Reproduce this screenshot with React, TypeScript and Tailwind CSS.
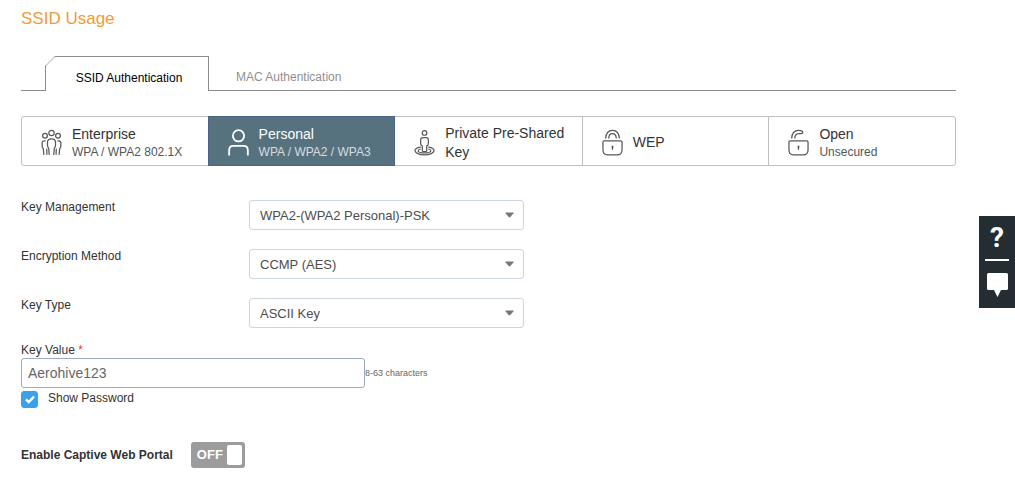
import React, { useState } from 'react';

const EnterpriseIcon = () => (
  <svg width="21" height="27" viewBox="0 0 22 28" fill="none" stroke="#585858" strokeWidth="1.3" strokeLinecap="round">
    <circle cx="11" cy="4" r="2.8" />
    <circle cx="4.2" cy="7" r="2.5" />
    <circle cx="17.8" cy="7" r="2.5" />
    <path d="M8.6 26.500l-.5-6.500c-1-.8-1.300-1.700-1.300-3v-3.400c0-2.200 1.200-3.400 4.200-3.400s4.200 1.200 4.200 3.400V17c0 1.300-.3 2.200-1.300 3l-.5 6.500" />
    <path d="M4.400 12.200H3.600C2 12.200 1.200 13 1.200 14.800v2.800c0 1.400.4 2.200 1.200 2.800l.6 6M6 21l.2 5.400" />
    <path d="M17.600 12.200h.8c1.600 0 2.400.8 2.400 2.600v2.800c0 1.400-.4 2.200-1.200 2.800l-.6 6M16 21l-.2 5.400" />
  </svg>
);

const PersonalIcon = () => (
  <svg width="21" height="27" viewBox="0 0 22 28" fill="none" stroke="#fff" strokeWidth="1.900">
    <circle cx="11" cy="7" r="5.900" />
    <path d="M1.200 27.500v-5.500c0-3 1.400-4.500 4.500-4.500h10.600c3.100 0 4.500 1.500 4.500 4.500v5.500" />
  </svg>
);

const PrivateKeyIcon = () => (
  <svg width="21" height="27" viewBox="0 0 22 28" fill="none" stroke="#585858" strokeWidth="1.300">
    <circle cx="11" cy="4" r="2.400" />
    <path d="M8.700 23v-5.200c-1.300-.5-1.700-1.200-1.700-2.400v-4.200c0-1.600.8-2.400 2.400-2.400h3.200c1.600 0 2.400.8 2.400 2.400v4.200c0 1.200-.4 1.900-1.700 2.400V23c-.6.800-4 .8-4.600 0z" />
    <path d="M7 18.800C3.500 19.300 1 20.700 1 22.500 1 25 5.400 27 11 27s10-2 10-4.500c0-1.800-2.500-3.200-6-3.700" />
    <path d="M7 20.800c-1.600.4-2.600 1-2.600 1.800 0 1.400 3 2.300 6.600 2.300s6.600-.9 6.600-2.300c0-.8-1-1.400-2.600-1.800" />
  </svg>
);

const LockBody = () => (
  <>
    <path d="M2.400 12.200h17.200c.9 0 1.400.5 1.400 1.400v8c0 3.600-1.500 5.400-5 5.400H6c-3.500 0-5-1.800-5-5.400v-8c0-.9.5-1.400 1.400-1.400z" />
    <path d="M10 17.500h2l-.5 4h-1z" fill="#505050" stroke="none" />
  </>
);

const LockIcon = () => (
  <svg width="21" height="27" viewBox="0 0 22 28" fill="none" stroke="#585858" strokeWidth="1.300">
    <path d="M3.800 9.800C4.100 4.500 6.600 1.200 11 1.200s6.900 3.300 7.200 8.600" />
    <path d="M7 9.800c.2-3.300 1.600-5.100 4-5.100s3.800 1.800 4 5.100" />
    <LockBody />
  </svg>
);

const OpenLockIcon = () => (
  <svg width="21" height="27" viewBox="0 0 22 28" fill="none" stroke="#585858" strokeWidth="1.300">
    <path d="M3.800 9.800C4.100 4.500 6.600 1.200 11 1.200c1.500 0 2.700.3 3.700.9 1 .6 1 2.100 0 2.500-1 .4-2.200-.1-3.700.1-2.400.2-3.800 1.800-4 5.100" />
    <LockBody />
  </svg>
);

const modes = [
  { id: 'enterprise', title: 'Enterprise', note: 'WPA / WPA2 802.1X', Icon: EnterpriseIcon },
  { id: 'personal', title: 'Personal', note: 'WPA / WPA2 / WPA3', Icon: PersonalIcon },
  { id: 'ppsk', title: 'Private Pre-Shared Key', note: '', Icon: PrivateKeyIcon },
  { id: 'wep', title: 'WEP', note: '', Icon: LockIcon },
  { id: 'open', title: 'Open', note: 'Unsecured', Icon: OpenLockIcon },
];

const fields = [
  { id: 'key-management', label: 'Key Management', value: 'WPA2-(WPA2 Personal)-PSK' },
  { id: 'encryption-method', label: 'Encryption Method', value: 'CCMP (AES)' },
  { id: 'key-type', label: 'Key Type', value: 'ASCII Key' },
];

const Tabs = () => (
  <div role="tablist" className="flex h-[35px] text-xs">
    <div className="w-6 border-b border-[#8c8c8c]" />
    <button
      type="button"
      role="tab"
      aria-selected="true"
      className="relative w-[164px] border border-b-0 border-[#8c8c8c] pt-2 pl-1 text-black"
    >
      <svg className="absolute -top-px -left-px" width="10" height="10" viewBox="0 0 10 10">
        <path d="M0 0h10L0 10z" fill="#fff" />
        <path d="M.5 10L10 .5" stroke="#a8a8a8" fill="none" />
      </svg>
      SSID Authentication
    </button>
    <div className="flex flex-1 border-b border-[#8c8c8c] pl-[27px]">
      <button type="button" role="tab" aria-selected="false" className="pt-2 text-[#8f8f8f]">
        MAC Authentication
      </button>
    </div>
  </div>
);

const ModePicker = ({ selected, onSelect }: { selected: string; onSelect: (id: string) => void }) => (
  <div className="mt-[25px] flex h-[50px] rounded-[3px] border border-[#bfbfbf]">
    {modes.map(({ id, title, note, Icon }, index) => {
      const active = id === selected;
      return (
        <button
          key={id}
          type="button"
          aria-pressed={active}
          onClick={() => onSelect(id)}
          className={`flex items-center gap-[10px] pl-[19px] text-left ${
            active
              ? '-my-px -ml-px w-[calc(20%+1px)] border border-[#4a6488] bg-[#57727f] text-white'
              : 'w-1/5 text-[#333]'
          } ${!active && index > 2 ? 'border-l border-[#bfbfbf]' : ''}`}
        >
          <span className="shrink-0 pt-0.5">
            <Icon />
          </span>
          <span className={note ? 'pt-1' : 'pt-[3px]'}>
            <span className={`block text-sm ${note ? 'leading-[17px]' : 'leading-[19px]'}`}>{title}</span>
            {note && (
              <span className={`block text-xs leading-[18px] ${active ? 'text-[#d5dde0]' : 'text-[#555]'}`}>{note}</span>
            )}
          </span>
        </button>
      );
    })}
  </div>
);

const SelectField = ({ id, label, value }: { id: string; label: string; value: string }) => (
  <div className="flex items-start">
    <label htmlFor={id} className="w-[228px] text-xs leading-[14px]">
      {label}
    </label>
    <div className="relative">
      <select
        id={id}
        defaultValue={value}
        className="h-[30px] w-[275px] appearance-none rounded-[3px] border border-[#ced5e2] bg-white px-[10px] pt-0.5 text-[13px] text-[#4d4d4d]"
      >
        <option>{value}</option>
      </select>
      <svg className="pointer-events-none absolute top-3 right-[10px]" width="9" height="6" viewBox="0 0 9 6" fill="#777">
        <path d="M1 .5h7q1 0 .4.900L5.300 5q-.8.800-1.600 0L.6 1.400Q0 .5 1 .5z" />
      </svg>
    </div>
  </div>
);

const HelpDock = () => (
  <aside className="fixed top-[216px] right-0 flex w-9 flex-col items-center bg-[#242d32] text-white">
    <button type="button" aria-label="Help" className="h-[43px] w-full font-[Roboto] text-[28px] leading-[43px] font-bold">
      ?
    </button>
    <div className="h-0.5 w-6 bg-white" />
    <button type="button" aria-label="Chat" className="flex h-[47px] w-full justify-center pt-3">
      <svg width="21" height="24" viewBox="0 0 21 24" fill="#fff">
        <path d="M1.500 0h18q1.500 0 1.500 1.500v14q0 1.500-1.500 1.500H14l-3.500 7L7 17H1.500Q0 17 0 15.500v-14Q0 0 1.500 0z" />
      </svg>
    </button>
  </aside>
);

export default function App() {
  const [mode, setMode] = useState('personal');
  const [showPassword, setShowPassword] = useState(true);
  const [portal, setPortal] = useState(false);

  return (
    <div className="bg-white font-['Liberation_Sans',Arial,sans-serif] text-[#333]">
      <main className="mr-[59px] ml-[21px] pt-[9px] pb-8">
        <h1 className="text-[17px] leading-5 text-[#f29b38]">SSID Usage</h1>

        <div className="mt-[27px]">
          <Tabs />
        </div>
        <ModePicker selected={mode} onSelect={setMode} />

        <div className="mt-[34px] flex flex-col gap-[19px]">
          {fields.map((field) => (
            <SelectField key={field.id} {...field} />
          ))}
        </div>

        {/* Key value */}
        <div className="mt-[15px] text-xs leading-[14px]">
          <label htmlFor="key-value" className="block pb-px">
            Key Value <span className="text-[#f03a2e]">*</span>
          </label>
          <div className="flex items-center">
            <input
              id="key-value"
              type={showPassword ? 'text' : 'password'}
              defaultValue="Aerohive123"
              className="h-[30px] w-[344px] rounded-[3px] border border-[#9aabc3] px-1.5 text-sm text-[#666]"
            />
            <span className="text-[9px] text-[#666]">8-63 characters</span>
          </div>
          <label className="relative mt-[3px] flex w-fit gap-[10px]">
            <input
              type="checkbox"
              checked={showPassword}
              onChange={() => setShowPassword(!showPassword)}
              className="h-[17px] w-[17px] appearance-none rounded-[3px] border border-[#3ba1ea] checked:bg-[#3ba1ea]"
            />
            {showPassword && (
              <svg className="pointer-events-none absolute top-1 left-1" width="10" height="9" viewBox="0 0 10 9" fill="none" stroke="#fff" strokeWidth="2.400">
                <path d="M.9 4.400l2.800 2.700L9 1.600" />
              </svg>
            )}
            Show Password
          </label>
        </div>

        {/* Captive web portal */}
        <div className="mt-[34px] flex items-center gap-[18px]">
          <span id="portal-label" className="text-xs font-bold">
            Enable Captive Web Portal
          </span>
          <button
            type="button"
            role="switch"
            aria-checked={portal}
            aria-labelledby="portal-label"
            onClick={() => setPortal(!portal)}
            className="flex h-[26px] w-[54px] items-center justify-between rounded-[3px] bg-[#9c9c9c] pr-[3px] pl-1.5 text-[13px] font-bold text-white"
          >
            {portal ? 'ON' : 'OFF'}
            <span className="h-5 w-[15px] rounded-xs bg-white" />
          </button>
        </div>
      </main>

      <HelpDock />
    </div>
  );
}
